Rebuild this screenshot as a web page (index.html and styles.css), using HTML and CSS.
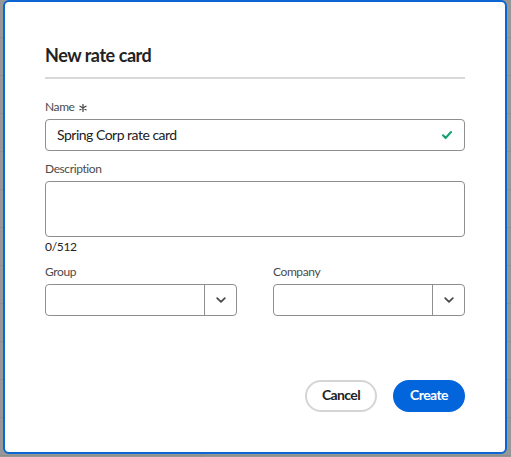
FILE: index.html
```html
<!DOCTYPE html>
<html lang="en">
<head>
<meta charset="utf-8">
<title>New rate card</title>
<link rel="stylesheet" href="styles.css">
</head>
<body>
<section class="dialog" role="dialog" aria-labelledby="dlg-title">
  <h2 class="title" id="dlg-title">New rate card</h2>
  <hr class="divider">
  <form class="form">
    <div class="field">
      <label class="label" for="name">Name <svg class="req" viewBox="0 0 8 8" width="8" height="8" aria-label="required"><path d="M4 0.5V7.5M1 2.2 7 5.8M7 2.2 1 5.8" fill="none" stroke="#4b4b4b" stroke-width="1.3" stroke-linecap="round"/></svg></label>
      <div class="input valid">
        <input id="name" type="text" value="Spring Corp rate card">
        <svg class="check" viewBox="0 0 10 8" width="10" height="8" aria-hidden="true"><path d="M1 4.2 3.6 7 9 1" fill="none" stroke="#12a26f" stroke-width="2" stroke-linecap="round" stroke-linejoin="round"/></svg>
      </div>
    </div>
    <div class="field">
      <label class="label" for="desc">Description</label>
      <textarea id="desc" class="textarea"></textarea>
      <div class="counter">0/512</div>
    </div>
    <div class="row">
      <div class="field">
        <label class="label" for="group">Group</label>
        <div class="combo">
          <input id="group" type="text">
          <button type="button" class="combo-btn" aria-label="Show suggestions">
            <svg viewBox="0 0 10 6" width="10" height="6" aria-hidden="true"><path d="M1.2 1.2 5 4.8 8.8 1.2" fill="none" stroke="#4b4b4b" stroke-width="1.8" stroke-linecap="round" stroke-linejoin="round"/></svg>
          </button>
        </div>
      </div>
      <div class="field">
        <label class="label" for="company">Company</label>
        <div class="combo">
          <input id="company" type="text">
          <button type="button" class="combo-btn" aria-label="Show suggestions">
            <svg viewBox="0 0 10 6" width="10" height="6" aria-hidden="true"><path d="M1.2 1.2 5 4.8 8.8 1.2" fill="none" stroke="#4b4b4b" stroke-width="1.8" stroke-linecap="round" stroke-linejoin="round"/></svg>
          </button>
        </div>
      </div>
    </div>
  </form>
  <div class="actions">
    <button type="button" class="btn btn-secondary">Cancel</button>
    <button type="button" class="btn btn-primary">Create</button>
  </div>
</section>
</body>
</html>
```

FILE: styles.css
```css
* { box-sizing: border-box; }

html, body { height: 100%; }

body {
  margin: 0;
  font-family: Lato, "Open Sans", "Liberation Sans", sans-serif;
  color: #222;
  background-color: #979797;
  background-image:
    linear-gradient(to right, transparent 201px, #8c8c8c 201px, #8c8c8c 202px, transparent 202px),
    repeating-linear-gradient(to bottom, transparent 0, transparent 37px, #8e8e8e 37px, #8e8e8e 38px);
  overflow: hidden;
}

.dialog {
  margin-left: 3px;
  width: 504px;
  height: 454px;
  background: #fff;
  border: 2px solid #0b66d3;
  border-radius: 6px;
  padding: 42px 40px 40px;
  display: flex;
  flex-direction: column;
}

.title {
  margin: 0;
  font-size: 18px;
  font-weight: 700;
  line-height: 22px;
  letter-spacing: -0.45px;
  color: #222;
}

.divider {
  margin: 11px 0 20px;
  border: 0;
  height: 2px;
  background: #d8d8d8;
}

.form {
  display: flex;
  flex-direction: column;
  gap: 10px;
}

.field {
  display: flex;
  flex-direction: column;
  min-width: 0;
}

.label {
  font-size: 12px;
  line-height: 16px;
  letter-spacing: -0.4px;
  color: #4b4b4b;
  padding-bottom: 4px;
}

.req {
  margin-left: 2px;
  vertical-align: -0.5px;
}

.input, .combo {
  position: relative;
  height: 32px;
  display: flex;
  border: 1px solid #8e8e8e;
  border-radius: 4px;
  background: #fff;
}

.input input, .combo input {
  flex: 1;
  width: 0;
  min-width: 0;
  border: 0;
  background: transparent;
  font: inherit;
  font-size: 14px;
  letter-spacing: -0.5px;
  color: #222;
  padding: 0 11px 2px;
  outline: none;
}

.check {
  align-self: center;
  margin-right: 12px;
}

.textarea {
  height: 56px;
  border: 1px solid #8e8e8e;
  border-radius: 4px;
  resize: none;
  font: inherit;
  font-size: 14px;
  padding: 6px 11px;
}

.counter {
  font-size: 12px;
  line-height: 16px;
  letter-spacing: -0.3px;
  color: #222;
  padding-top: 2px;
}

.row {
  display: grid;
  grid-template-columns: minmax(0, 1fr) minmax(0, 1fr);
  column-gap: 36px;
  margin-top: -1px;
}

.combo-btn {
  flex: none;
  width: 32px;
  border: 0;
  border-left: 1px solid #8e8e8e;
  background: transparent;
  padding: 0;
  display: flex;
  align-items: center;
  justify-content: center;
}

.actions {
  margin-top: auto;
  display: flex;
  justify-content: flex-end;
  gap: 16px;
}

.btn {
  height: 32px;
  width: 72px;
  border-radius: 16px;
  font: inherit;
  font-size: 14px;
  font-weight: 700;
  letter-spacing: -0.6px;
  padding: 0 0 3px;
}

.btn-secondary {
  background: #fff;
  border: 2px solid #d5d5d5;
  color: #222;
}

.btn-primary {
  background: #0265dc;
  border: 2px solid #0265dc;
  color: #fff;
}
```
